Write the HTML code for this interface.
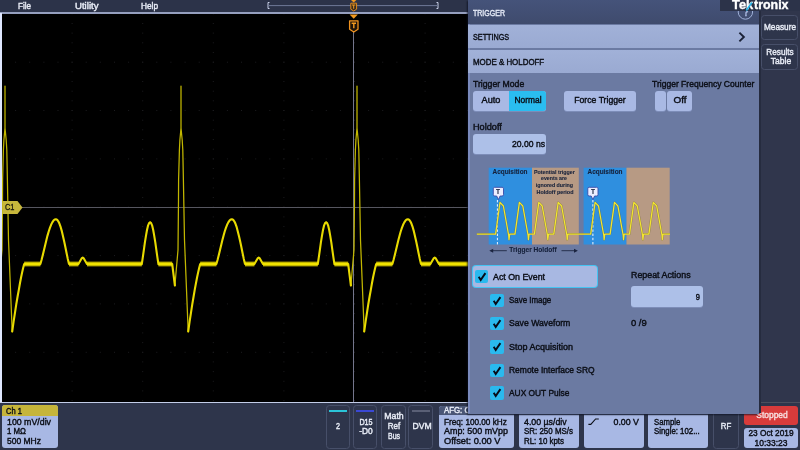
<!DOCTYPE html>
<html><head><meta charset="utf-8"><title>Trigger - Mode &amp; Holdoff</title>
<style>
html,body{margin:0;padding:0;background:#000;}
body{width:800px;height:450px;position:relative;overflow:hidden;font-family:"Liberation Sans",sans-serif;font-size:9.2px;color:#0b0e16;}
#root{position:absolute;left:0;top:0;width:800px;height:450px;overflow:hidden;will-change:transform;}
.a{position:absolute;white-space:nowrap;}
.t{position:absolute;white-space:nowrap;}
.badge{background:#a8b8e4;border-radius:3px;overflow:hidden;}
.bh{position:absolute;left:0;top:0;width:100%;height:9.6px;background:#4a5676;}
.btn{background:#2e354b;border:1px solid #474f69;border-radius:3.5px;box-sizing:border-box;}
.lb{background:#a9b9e4;border-radius:3px;box-shadow:0 1px 0 0 #7d8db8;}
.cb{background:#2ab9ee;border-radius:2px;width:13.6px;height:13.2px;}
.ck{position:absolute;left:0;top:0;}
</style></head><body><div id="root">

<svg class="a" style="left:0;top:0" width="800" height="450" viewBox="0 0 800 450">
<g fill="#5c5c66" opacity="0.3"><rect x="71.6" y="13.3" width="1" height="1"/><rect x="71.6" y="23.0" width="1" height="1"/><rect x="71.6" y="32.6" width="1" height="1"/><rect x="71.6" y="42.3" width="1" height="1"/><rect x="71.6" y="52.0" width="1" height="1"/><rect x="71.6" y="61.7" width="1" height="1"/><rect x="71.6" y="71.3" width="1" height="1"/><rect x="71.6" y="81.0" width="1" height="1"/><rect x="71.6" y="90.7" width="1" height="1"/><rect x="71.6" y="100.3" width="1" height="1"/><rect x="71.6" y="110.0" width="1" height="1"/><rect x="71.6" y="119.7" width="1" height="1"/><rect x="71.6" y="129.3" width="1" height="1"/><rect x="71.6" y="139.0" width="1" height="1"/><rect x="71.6" y="148.7" width="1" height="1"/><rect x="71.6" y="158.4" width="1" height="1"/><rect x="71.6" y="168.0" width="1" height="1"/><rect x="71.6" y="177.7" width="1" height="1"/><rect x="71.6" y="187.4" width="1" height="1"/><rect x="71.6" y="197.0" width="1" height="1"/><rect x="71.6" y="206.7" width="1" height="1"/><rect x="71.6" y="216.4" width="1" height="1"/><rect x="71.6" y="226.0" width="1" height="1"/><rect x="71.6" y="235.7" width="1" height="1"/><rect x="71.6" y="245.4" width="1" height="1"/><rect x="71.6" y="255.1" width="1" height="1"/><rect x="71.6" y="264.7" width="1" height="1"/><rect x="71.6" y="274.4" width="1" height="1"/><rect x="71.6" y="284.1" width="1" height="1"/><rect x="71.6" y="293.7" width="1" height="1"/><rect x="71.6" y="303.4" width="1" height="1"/><rect x="71.6" y="313.1" width="1" height="1"/><rect x="71.6" y="322.7" width="1" height="1"/><rect x="71.6" y="332.4" width="1" height="1"/><rect x="71.6" y="342.1" width="1" height="1"/><rect x="71.6" y="351.8" width="1" height="1"/><rect x="71.6" y="361.4" width="1" height="1"/><rect x="71.6" y="371.1" width="1" height="1"/><rect x="71.6" y="380.8" width="1" height="1"/><rect x="71.6" y="390.4" width="1" height="1"/><rect x="71.6" y="400.1" width="1" height="1"/><rect x="142.2" y="13.3" width="1" height="1"/><rect x="142.2" y="23.0" width="1" height="1"/><rect x="142.2" y="32.6" width="1" height="1"/><rect x="142.2" y="42.3" width="1" height="1"/><rect x="142.2" y="52.0" width="1" height="1"/><rect x="142.2" y="61.7" width="1" height="1"/><rect x="142.2" y="71.3" width="1" height="1"/><rect x="142.2" y="81.0" width="1" height="1"/><rect x="142.2" y="90.7" width="1" height="1"/><rect x="142.2" y="100.3" width="1" height="1"/><rect x="142.2" y="110.0" width="1" height="1"/><rect x="142.2" y="119.7" width="1" height="1"/><rect x="142.2" y="129.3" width="1" height="1"/><rect x="142.2" y="139.0" width="1" height="1"/><rect x="142.2" y="148.7" width="1" height="1"/><rect x="142.2" y="158.4" width="1" height="1"/><rect x="142.2" y="168.0" width="1" height="1"/><rect x="142.2" y="177.7" width="1" height="1"/><rect x="142.2" y="187.4" width="1" height="1"/><rect x="142.2" y="197.0" width="1" height="1"/><rect x="142.2" y="206.7" width="1" height="1"/><rect x="142.2" y="216.4" width="1" height="1"/><rect x="142.2" y="226.0" width="1" height="1"/><rect x="142.2" y="235.7" width="1" height="1"/><rect x="142.2" y="245.4" width="1" height="1"/><rect x="142.2" y="255.1" width="1" height="1"/><rect x="142.2" y="264.7" width="1" height="1"/><rect x="142.2" y="274.4" width="1" height="1"/><rect x="142.2" y="284.1" width="1" height="1"/><rect x="142.2" y="293.7" width="1" height="1"/><rect x="142.2" y="303.4" width="1" height="1"/><rect x="142.2" y="313.1" width="1" height="1"/><rect x="142.2" y="322.7" width="1" height="1"/><rect x="142.2" y="332.4" width="1" height="1"/><rect x="142.2" y="342.1" width="1" height="1"/><rect x="142.2" y="351.8" width="1" height="1"/><rect x="142.2" y="361.4" width="1" height="1"/><rect x="142.2" y="371.1" width="1" height="1"/><rect x="142.2" y="380.8" width="1" height="1"/><rect x="142.2" y="390.4" width="1" height="1"/><rect x="142.2" y="400.1" width="1" height="1"/><rect x="212.8" y="13.3" width="1" height="1"/><rect x="212.8" y="23.0" width="1" height="1"/><rect x="212.8" y="32.6" width="1" height="1"/><rect x="212.8" y="42.3" width="1" height="1"/><rect x="212.8" y="52.0" width="1" height="1"/><rect x="212.8" y="61.7" width="1" height="1"/><rect x="212.8" y="71.3" width="1" height="1"/><rect x="212.8" y="81.0" width="1" height="1"/><rect x="212.8" y="90.7" width="1" height="1"/><rect x="212.8" y="100.3" width="1" height="1"/><rect x="212.8" y="110.0" width="1" height="1"/><rect x="212.8" y="119.7" width="1" height="1"/><rect x="212.8" y="129.3" width="1" height="1"/><rect x="212.8" y="139.0" width="1" height="1"/><rect x="212.8" y="148.7" width="1" height="1"/><rect x="212.8" y="158.4" width="1" height="1"/><rect x="212.8" y="168.0" width="1" height="1"/><rect x="212.8" y="177.7" width="1" height="1"/><rect x="212.8" y="187.4" width="1" height="1"/><rect x="212.8" y="197.0" width="1" height="1"/><rect x="212.8" y="206.7" width="1" height="1"/><rect x="212.8" y="216.4" width="1" height="1"/><rect x="212.8" y="226.0" width="1" height="1"/><rect x="212.8" y="235.7" width="1" height="1"/><rect x="212.8" y="245.4" width="1" height="1"/><rect x="212.8" y="255.1" width="1" height="1"/><rect x="212.8" y="264.7" width="1" height="1"/><rect x="212.8" y="274.4" width="1" height="1"/><rect x="212.8" y="284.1" width="1" height="1"/><rect x="212.8" y="293.7" width="1" height="1"/><rect x="212.8" y="303.4" width="1" height="1"/><rect x="212.8" y="313.1" width="1" height="1"/><rect x="212.8" y="322.7" width="1" height="1"/><rect x="212.8" y="332.4" width="1" height="1"/><rect x="212.8" y="342.1" width="1" height="1"/><rect x="212.8" y="351.8" width="1" height="1"/><rect x="212.8" y="361.4" width="1" height="1"/><rect x="212.8" y="371.1" width="1" height="1"/><rect x="212.8" y="380.8" width="1" height="1"/><rect x="212.8" y="390.4" width="1" height="1"/><rect x="212.8" y="400.1" width="1" height="1"/><rect x="283.4" y="13.3" width="1" height="1"/><rect x="283.4" y="23.0" width="1" height="1"/><rect x="283.4" y="32.6" width="1" height="1"/><rect x="283.4" y="42.3" width="1" height="1"/><rect x="283.4" y="52.0" width="1" height="1"/><rect x="283.4" y="61.7" width="1" height="1"/><rect x="283.4" y="71.3" width="1" height="1"/><rect x="283.4" y="81.0" width="1" height="1"/><rect x="283.4" y="90.7" width="1" height="1"/><rect x="283.4" y="100.3" width="1" height="1"/><rect x="283.4" y="110.0" width="1" height="1"/><rect x="283.4" y="119.7" width="1" height="1"/><rect x="283.4" y="129.3" width="1" height="1"/><rect x="283.4" y="139.0" width="1" height="1"/><rect x="283.4" y="148.7" width="1" height="1"/><rect x="283.4" y="158.4" width="1" height="1"/><rect x="283.4" y="168.0" width="1" height="1"/><rect x="283.4" y="177.7" width="1" height="1"/><rect x="283.4" y="187.4" width="1" height="1"/><rect x="283.4" y="197.0" width="1" height="1"/><rect x="283.4" y="206.7" width="1" height="1"/><rect x="283.4" y="216.4" width="1" height="1"/><rect x="283.4" y="226.0" width="1" height="1"/><rect x="283.4" y="235.7" width="1" height="1"/><rect x="283.4" y="245.4" width="1" height="1"/><rect x="283.4" y="255.1" width="1" height="1"/><rect x="283.4" y="264.7" width="1" height="1"/><rect x="283.4" y="274.4" width="1" height="1"/><rect x="283.4" y="284.1" width="1" height="1"/><rect x="283.4" y="293.7" width="1" height="1"/><rect x="283.4" y="303.4" width="1" height="1"/><rect x="283.4" y="313.1" width="1" height="1"/><rect x="283.4" y="322.7" width="1" height="1"/><rect x="283.4" y="332.4" width="1" height="1"/><rect x="283.4" y="342.1" width="1" height="1"/><rect x="283.4" y="351.8" width="1" height="1"/><rect x="283.4" y="361.4" width="1" height="1"/><rect x="283.4" y="371.1" width="1" height="1"/><rect x="283.4" y="380.8" width="1" height="1"/><rect x="283.4" y="390.4" width="1" height="1"/><rect x="283.4" y="400.1" width="1" height="1"/><rect x="354.0" y="13.3" width="1" height="1"/><rect x="354.0" y="23.0" width="1" height="1"/><rect x="354.0" y="32.6" width="1" height="1"/><rect x="354.0" y="42.3" width="1" height="1"/><rect x="354.0" y="52.0" width="1" height="1"/><rect x="354.0" y="61.7" width="1" height="1"/><rect x="354.0" y="71.3" width="1" height="1"/><rect x="354.0" y="81.0" width="1" height="1"/><rect x="354.0" y="90.7" width="1" height="1"/><rect x="354.0" y="100.3" width="1" height="1"/><rect x="354.0" y="110.0" width="1" height="1"/><rect x="354.0" y="119.7" width="1" height="1"/><rect x="354.0" y="129.3" width="1" height="1"/><rect x="354.0" y="139.0" width="1" height="1"/><rect x="354.0" y="148.7" width="1" height="1"/><rect x="354.0" y="158.4" width="1" height="1"/><rect x="354.0" y="168.0" width="1" height="1"/><rect x="354.0" y="177.7" width="1" height="1"/><rect x="354.0" y="187.4" width="1" height="1"/><rect x="354.0" y="197.0" width="1" height="1"/><rect x="354.0" y="206.7" width="1" height="1"/><rect x="354.0" y="216.4" width="1" height="1"/><rect x="354.0" y="226.0" width="1" height="1"/><rect x="354.0" y="235.7" width="1" height="1"/><rect x="354.0" y="245.4" width="1" height="1"/><rect x="354.0" y="255.1" width="1" height="1"/><rect x="354.0" y="264.7" width="1" height="1"/><rect x="354.0" y="274.4" width="1" height="1"/><rect x="354.0" y="284.1" width="1" height="1"/><rect x="354.0" y="293.7" width="1" height="1"/><rect x="354.0" y="303.4" width="1" height="1"/><rect x="354.0" y="313.1" width="1" height="1"/><rect x="354.0" y="322.7" width="1" height="1"/><rect x="354.0" y="332.4" width="1" height="1"/><rect x="354.0" y="342.1" width="1" height="1"/><rect x="354.0" y="351.8" width="1" height="1"/><rect x="354.0" y="361.4" width="1" height="1"/><rect x="354.0" y="371.1" width="1" height="1"/><rect x="354.0" y="380.8" width="1" height="1"/><rect x="354.0" y="390.4" width="1" height="1"/><rect x="354.0" y="400.1" width="1" height="1"/><rect x="424.6" y="13.3" width="1" height="1"/><rect x="424.6" y="23.0" width="1" height="1"/><rect x="424.6" y="32.6" width="1" height="1"/><rect x="424.6" y="42.3" width="1" height="1"/><rect x="424.6" y="52.0" width="1" height="1"/><rect x="424.6" y="61.7" width="1" height="1"/><rect x="424.6" y="71.3" width="1" height="1"/><rect x="424.6" y="81.0" width="1" height="1"/><rect x="424.6" y="90.7" width="1" height="1"/><rect x="424.6" y="100.3" width="1" height="1"/><rect x="424.6" y="110.0" width="1" height="1"/><rect x="424.6" y="119.7" width="1" height="1"/><rect x="424.6" y="129.3" width="1" height="1"/><rect x="424.6" y="139.0" width="1" height="1"/><rect x="424.6" y="148.7" width="1" height="1"/><rect x="424.6" y="158.4" width="1" height="1"/><rect x="424.6" y="168.0" width="1" height="1"/><rect x="424.6" y="177.7" width="1" height="1"/><rect x="424.6" y="187.4" width="1" height="1"/><rect x="424.6" y="197.0" width="1" height="1"/><rect x="424.6" y="206.7" width="1" height="1"/><rect x="424.6" y="216.4" width="1" height="1"/><rect x="424.6" y="226.0" width="1" height="1"/><rect x="424.6" y="235.7" width="1" height="1"/><rect x="424.6" y="245.4" width="1" height="1"/><rect x="424.6" y="255.1" width="1" height="1"/><rect x="424.6" y="264.7" width="1" height="1"/><rect x="424.6" y="274.4" width="1" height="1"/><rect x="424.6" y="284.1" width="1" height="1"/><rect x="424.6" y="293.7" width="1" height="1"/><rect x="424.6" y="303.4" width="1" height="1"/><rect x="424.6" y="313.1" width="1" height="1"/><rect x="424.6" y="322.7" width="1" height="1"/><rect x="424.6" y="332.4" width="1" height="1"/><rect x="424.6" y="342.1" width="1" height="1"/><rect x="424.6" y="351.8" width="1" height="1"/><rect x="424.6" y="361.4" width="1" height="1"/><rect x="424.6" y="371.1" width="1" height="1"/><rect x="424.6" y="380.8" width="1" height="1"/><rect x="424.6" y="390.4" width="1" height="1"/><rect x="424.6" y="400.1" width="1" height="1"/><rect x="1.0" y="61.7" width="1" height="1"/><rect x="15.1" y="61.7" width="1" height="1"/><rect x="29.2" y="61.7" width="1" height="1"/><rect x="43.4" y="61.7" width="1" height="1"/><rect x="57.5" y="61.7" width="1" height="1"/><rect x="71.6" y="61.7" width="1" height="1"/><rect x="85.7" y="61.7" width="1" height="1"/><rect x="99.8" y="61.7" width="1" height="1"/><rect x="114.0" y="61.7" width="1" height="1"/><rect x="128.1" y="61.7" width="1" height="1"/><rect x="142.2" y="61.7" width="1" height="1"/><rect x="156.3" y="61.7" width="1" height="1"/><rect x="170.4" y="61.7" width="1" height="1"/><rect x="184.6" y="61.7" width="1" height="1"/><rect x="198.7" y="61.7" width="1" height="1"/><rect x="212.8" y="61.7" width="1" height="1"/><rect x="226.9" y="61.7" width="1" height="1"/><rect x="241.0" y="61.7" width="1" height="1"/><rect x="255.2" y="61.7" width="1" height="1"/><rect x="269.3" y="61.7" width="1" height="1"/><rect x="283.4" y="61.7" width="1" height="1"/><rect x="297.5" y="61.7" width="1" height="1"/><rect x="311.6" y="61.7" width="1" height="1"/><rect x="325.8" y="61.7" width="1" height="1"/><rect x="339.9" y="61.7" width="1" height="1"/><rect x="354.0" y="61.7" width="1" height="1"/><rect x="368.1" y="61.7" width="1" height="1"/><rect x="382.2" y="61.7" width="1" height="1"/><rect x="396.4" y="61.7" width="1" height="1"/><rect x="410.5" y="61.7" width="1" height="1"/><rect x="424.6" y="61.7" width="1" height="1"/><rect x="438.7" y="61.7" width="1" height="1"/><rect x="452.8" y="61.7" width="1" height="1"/><rect x="467.0" y="61.7" width="1" height="1"/><rect x="1.0" y="110.0" width="1" height="1"/><rect x="15.1" y="110.0" width="1" height="1"/><rect x="29.2" y="110.0" width="1" height="1"/><rect x="43.4" y="110.0" width="1" height="1"/><rect x="57.5" y="110.0" width="1" height="1"/><rect x="71.6" y="110.0" width="1" height="1"/><rect x="85.7" y="110.0" width="1" height="1"/><rect x="99.8" y="110.0" width="1" height="1"/><rect x="114.0" y="110.0" width="1" height="1"/><rect x="128.1" y="110.0" width="1" height="1"/><rect x="142.2" y="110.0" width="1" height="1"/><rect x="156.3" y="110.0" width="1" height="1"/><rect x="170.4" y="110.0" width="1" height="1"/><rect x="184.6" y="110.0" width="1" height="1"/><rect x="198.7" y="110.0" width="1" height="1"/><rect x="212.8" y="110.0" width="1" height="1"/><rect x="226.9" y="110.0" width="1" height="1"/><rect x="241.0" y="110.0" width="1" height="1"/><rect x="255.2" y="110.0" width="1" height="1"/><rect x="269.3" y="110.0" width="1" height="1"/><rect x="283.4" y="110.0" width="1" height="1"/><rect x="297.5" y="110.0" width="1" height="1"/><rect x="311.6" y="110.0" width="1" height="1"/><rect x="325.8" y="110.0" width="1" height="1"/><rect x="339.9" y="110.0" width="1" height="1"/><rect x="354.0" y="110.0" width="1" height="1"/><rect x="368.1" y="110.0" width="1" height="1"/><rect x="382.2" y="110.0" width="1" height="1"/><rect x="396.4" y="110.0" width="1" height="1"/><rect x="410.5" y="110.0" width="1" height="1"/><rect x="424.6" y="110.0" width="1" height="1"/><rect x="438.7" y="110.0" width="1" height="1"/><rect x="452.8" y="110.0" width="1" height="1"/><rect x="467.0" y="110.0" width="1" height="1"/><rect x="1.0" y="158.4" width="1" height="1"/><rect x="15.1" y="158.4" width="1" height="1"/><rect x="29.2" y="158.4" width="1" height="1"/><rect x="43.4" y="158.4" width="1" height="1"/><rect x="57.5" y="158.4" width="1" height="1"/><rect x="71.6" y="158.4" width="1" height="1"/><rect x="85.7" y="158.4" width="1" height="1"/><rect x="99.8" y="158.4" width="1" height="1"/><rect x="114.0" y="158.4" width="1" height="1"/><rect x="128.1" y="158.4" width="1" height="1"/><rect x="142.2" y="158.4" width="1" height="1"/><rect x="156.3" y="158.4" width="1" height="1"/><rect x="170.4" y="158.4" width="1" height="1"/><rect x="184.6" y="158.4" width="1" height="1"/><rect x="198.7" y="158.4" width="1" height="1"/><rect x="212.8" y="158.4" width="1" height="1"/><rect x="226.9" y="158.4" width="1" height="1"/><rect x="241.0" y="158.4" width="1" height="1"/><rect x="255.2" y="158.4" width="1" height="1"/><rect x="269.3" y="158.4" width="1" height="1"/><rect x="283.4" y="158.4" width="1" height="1"/><rect x="297.5" y="158.4" width="1" height="1"/><rect x="311.6" y="158.4" width="1" height="1"/><rect x="325.8" y="158.4" width="1" height="1"/><rect x="339.9" y="158.4" width="1" height="1"/><rect x="354.0" y="158.4" width="1" height="1"/><rect x="368.1" y="158.4" width="1" height="1"/><rect x="382.2" y="158.4" width="1" height="1"/><rect x="396.4" y="158.4" width="1" height="1"/><rect x="410.5" y="158.4" width="1" height="1"/><rect x="424.6" y="158.4" width="1" height="1"/><rect x="438.7" y="158.4" width="1" height="1"/><rect x="452.8" y="158.4" width="1" height="1"/><rect x="467.0" y="158.4" width="1" height="1"/><rect x="1.0" y="206.7" width="1" height="1"/><rect x="15.1" y="206.7" width="1" height="1"/><rect x="29.2" y="206.7" width="1" height="1"/><rect x="43.4" y="206.7" width="1" height="1"/><rect x="57.5" y="206.7" width="1" height="1"/><rect x="71.6" y="206.7" width="1" height="1"/><rect x="85.7" y="206.7" width="1" height="1"/><rect x="99.8" y="206.7" width="1" height="1"/><rect x="114.0" y="206.7" width="1" height="1"/><rect x="128.1" y="206.7" width="1" height="1"/><rect x="142.2" y="206.7" width="1" height="1"/><rect x="156.3" y="206.7" width="1" height="1"/><rect x="170.4" y="206.7" width="1" height="1"/><rect x="184.6" y="206.7" width="1" height="1"/><rect x="198.7" y="206.7" width="1" height="1"/><rect x="212.8" y="206.7" width="1" height="1"/><rect x="226.9" y="206.7" width="1" height="1"/><rect x="241.0" y="206.7" width="1" height="1"/><rect x="255.2" y="206.7" width="1" height="1"/><rect x="269.3" y="206.7" width="1" height="1"/><rect x="283.4" y="206.7" width="1" height="1"/><rect x="297.5" y="206.7" width="1" height="1"/><rect x="311.6" y="206.7" width="1" height="1"/><rect x="325.8" y="206.7" width="1" height="1"/><rect x="339.9" y="206.7" width="1" height="1"/><rect x="354.0" y="206.7" width="1" height="1"/><rect x="368.1" y="206.7" width="1" height="1"/><rect x="382.2" y="206.7" width="1" height="1"/><rect x="396.4" y="206.7" width="1" height="1"/><rect x="410.5" y="206.7" width="1" height="1"/><rect x="424.6" y="206.7" width="1" height="1"/><rect x="438.7" y="206.7" width="1" height="1"/><rect x="452.8" y="206.7" width="1" height="1"/><rect x="467.0" y="206.7" width="1" height="1"/><rect x="1.0" y="255.1" width="1" height="1"/><rect x="15.1" y="255.1" width="1" height="1"/><rect x="29.2" y="255.1" width="1" height="1"/><rect x="43.4" y="255.1" width="1" height="1"/><rect x="57.5" y="255.1" width="1" height="1"/><rect x="71.6" y="255.1" width="1" height="1"/><rect x="85.7" y="255.1" width="1" height="1"/><rect x="99.8" y="255.1" width="1" height="1"/><rect x="114.0" y="255.1" width="1" height="1"/><rect x="128.1" y="255.1" width="1" height="1"/><rect x="142.2" y="255.1" width="1" height="1"/><rect x="156.3" y="255.1" width="1" height="1"/><rect x="170.4" y="255.1" width="1" height="1"/><rect x="184.6" y="255.1" width="1" height="1"/><rect x="198.7" y="255.1" width="1" height="1"/><rect x="212.8" y="255.1" width="1" height="1"/><rect x="226.9" y="255.1" width="1" height="1"/><rect x="241.0" y="255.1" width="1" height="1"/><rect x="255.2" y="255.1" width="1" height="1"/><rect x="269.3" y="255.1" width="1" height="1"/><rect x="283.4" y="255.1" width="1" height="1"/><rect x="297.5" y="255.1" width="1" height="1"/><rect x="311.6" y="255.1" width="1" height="1"/><rect x="325.8" y="255.1" width="1" height="1"/><rect x="339.9" y="255.1" width="1" height="1"/><rect x="354.0" y="255.1" width="1" height="1"/><rect x="368.1" y="255.1" width="1" height="1"/><rect x="382.2" y="255.1" width="1" height="1"/><rect x="396.4" y="255.1" width="1" height="1"/><rect x="410.5" y="255.1" width="1" height="1"/><rect x="424.6" y="255.1" width="1" height="1"/><rect x="438.7" y="255.1" width="1" height="1"/><rect x="452.8" y="255.1" width="1" height="1"/><rect x="467.0" y="255.1" width="1" height="1"/><rect x="1.0" y="303.4" width="1" height="1"/><rect x="15.1" y="303.4" width="1" height="1"/><rect x="29.2" y="303.4" width="1" height="1"/><rect x="43.4" y="303.4" width="1" height="1"/><rect x="57.5" y="303.4" width="1" height="1"/><rect x="71.6" y="303.4" width="1" height="1"/><rect x="85.7" y="303.4" width="1" height="1"/><rect x="99.8" y="303.4" width="1" height="1"/><rect x="114.0" y="303.4" width="1" height="1"/><rect x="128.1" y="303.4" width="1" height="1"/><rect x="142.2" y="303.4" width="1" height="1"/><rect x="156.3" y="303.4" width="1" height="1"/><rect x="170.4" y="303.4" width="1" height="1"/><rect x="184.6" y="303.4" width="1" height="1"/><rect x="198.7" y="303.4" width="1" height="1"/><rect x="212.8" y="303.4" width="1" height="1"/><rect x="226.9" y="303.4" width="1" height="1"/><rect x="241.0" y="303.4" width="1" height="1"/><rect x="255.2" y="303.4" width="1" height="1"/><rect x="269.3" y="303.4" width="1" height="1"/><rect x="283.4" y="303.4" width="1" height="1"/><rect x="297.5" y="303.4" width="1" height="1"/><rect x="311.6" y="303.4" width="1" height="1"/><rect x="325.8" y="303.4" width="1" height="1"/><rect x="339.9" y="303.4" width="1" height="1"/><rect x="354.0" y="303.4" width="1" height="1"/><rect x="368.1" y="303.4" width="1" height="1"/><rect x="382.2" y="303.4" width="1" height="1"/><rect x="396.4" y="303.4" width="1" height="1"/><rect x="410.5" y="303.4" width="1" height="1"/><rect x="424.6" y="303.4" width="1" height="1"/><rect x="438.7" y="303.4" width="1" height="1"/><rect x="452.8" y="303.4" width="1" height="1"/><rect x="467.0" y="303.4" width="1" height="1"/><rect x="1.0" y="351.8" width="1" height="1"/><rect x="15.1" y="351.8" width="1" height="1"/><rect x="29.2" y="351.8" width="1" height="1"/><rect x="43.4" y="351.8" width="1" height="1"/><rect x="57.5" y="351.8" width="1" height="1"/><rect x="71.6" y="351.8" width="1" height="1"/><rect x="85.7" y="351.8" width="1" height="1"/><rect x="99.8" y="351.8" width="1" height="1"/><rect x="114.0" y="351.8" width="1" height="1"/><rect x="128.1" y="351.8" width="1" height="1"/><rect x="142.2" y="351.8" width="1" height="1"/><rect x="156.3" y="351.8" width="1" height="1"/><rect x="170.4" y="351.8" width="1" height="1"/><rect x="184.6" y="351.8" width="1" height="1"/><rect x="198.7" y="351.8" width="1" height="1"/><rect x="212.8" y="351.8" width="1" height="1"/><rect x="226.9" y="351.8" width="1" height="1"/><rect x="241.0" y="351.8" width="1" height="1"/><rect x="255.2" y="351.8" width="1" height="1"/><rect x="269.3" y="351.8" width="1" height="1"/><rect x="283.4" y="351.8" width="1" height="1"/><rect x="297.5" y="351.8" width="1" height="1"/><rect x="311.6" y="351.8" width="1" height="1"/><rect x="325.8" y="351.8" width="1" height="1"/><rect x="339.9" y="351.8" width="1" height="1"/><rect x="354.0" y="351.8" width="1" height="1"/><rect x="368.1" y="351.8" width="1" height="1"/><rect x="382.2" y="351.8" width="1" height="1"/><rect x="396.4" y="351.8" width="1" height="1"/><rect x="410.5" y="351.8" width="1" height="1"/><rect x="424.6" y="351.8" width="1" height="1"/><rect x="438.7" y="351.8" width="1" height="1"/><rect x="452.8" y="351.8" width="1" height="1"/><rect x="467.0" y="351.8" width="1" height="1"/></g>
<line x1="22" y1="207.5" x2="468" y2="207.5" stroke="#56565f" stroke-width="1"/>
<line x1="353.5" y1="32" x2="353.5" y2="402" stroke="#74768c" stroke-width="1"/>
<g fill="none" stroke-linejoin="round" stroke-linecap="round">
<path d="M24.2,264.0H40.4 M69.0,264.0H78.4 M87.0,264.0H141.8 M158.4,264.0H172.2 M200.2,264.0H216.4 M245.0,264.0H254.4 M263.0,264.0H317.8 M334.4,264.0H348.2 M376.2,264.0H392.4 M421.0,264.0H430.4 M439.0,264.0H493.8" stroke="#8f8400" stroke-width="5" stroke-linecap="butt"/>
<path d="M-1.1,285.5 L2.0,250.0 L2.5,200.0 L2.6,180.0 L3.4,150.0 L3.9,140.0 L5.0,128.0 L5.0,86.0 L5.0,128.0 L6.2,140.0 L6.8,150.0 L7.4,180.0 L8.5,240.0 L12.2,331.5 M174.9,285.5 L178.0,250.0 L178.5,200.0 L178.6,180.0 L179.4,150.0 L179.9,140.0 L181.0,128.0 L181.0,86.0 L181.0,128.0 L182.2,140.0 L182.8,150.0 L183.4,180.0 L184.5,240.0 L188.2,331.5 M350.9,285.5 L354.0,250.0 L354.5,200.0 L354.6,180.0 L355.4,150.0 L355.9,140.0 L357.0,128.0 L357.0,86.0 L357.0,128.0 L358.2,140.0 L358.8,150.0 L359.4,180.0 L360.5,240.0 L364.2,331.5" stroke="#c2b700" stroke-width="1.25"/>
<path d="M-19.7,249.7 L-18.6,257.3 L-17.6,264.0 L-3.8,264.0 L-1.1,285.5 M12.2,331.5 L13.6,321.7 L15.0,312.6 L16.3,304.2 L17.6,296.5 L18.9,289.4 L20.0,283.0 L21.1,277.2 L22.2,272.1 L23.2,267.7 L24.2,264.0 L40.4,264.0 L41.6,259.8 L42.8,254.9 L44.0,249.9 L45.2,244.9 L46.4,240.1 L47.5,235.6 L48.7,231.5 L49.9,227.9 L51.1,224.8 L52.3,222.4 L53.5,220.6 L54.7,219.5 L55.9,219.2 L57.1,219.7 L58.3,221.3 L59.5,223.8 L60.7,227.2 L61.9,231.4 L63.0,236.2 L64.2,241.6 L65.4,247.3 L66.6,253.2 L67.8,259.0 L69.0,264.0 L78.4,264.0 L81.6,258.4 L82.7,257.6 L83.8,258.4 L87.0,264.0 L141.8,264.0 L142.8,257.3 L143.9,249.7 L144.9,242.4 L146.0,235.6 L147.0,230.0 L148.0,225.7 L149.1,223.1 L150.1,222.2 L151.1,223.1 L152.2,225.7 L153.2,230.0 L154.2,235.6 L155.3,242.4 L156.3,249.7 L157.4,257.3 L158.4,264.0 L172.2,264.0 L174.9,285.5 M188.2,331.5 L189.6,321.7 L191.0,312.6 L192.3,304.2 L193.6,296.5 L194.8,289.4 L196.0,283.0 L197.1,277.2 L198.2,272.1 L199.2,267.7 L200.2,264.0 L216.4,264.0 L217.6,259.8 L218.8,254.9 L220.0,249.9 L221.2,244.9 L222.4,240.1 L223.6,235.6 L224.7,231.5 L225.9,227.9 L227.1,224.8 L228.3,222.4 L229.5,220.6 L230.7,219.5 L231.9,219.2 L233.1,219.7 L234.3,221.3 L235.5,223.8 L236.7,227.2 L237.8,231.4 L239.0,236.2 L240.2,241.6 L241.4,247.3 L242.6,253.2 L243.8,259.0 L245.0,264.0 L254.4,264.0 L257.6,258.4 L258.7,257.6 L259.8,258.4 L263.0,264.0 L317.8,264.0 L318.8,257.3 L319.9,249.7 L320.9,242.4 L322.0,235.6 L323.0,230.0 L324.0,225.7 L325.1,223.1 L326.1,222.2 L327.1,223.1 L328.2,225.7 L329.2,230.0 L330.2,235.6 L331.3,242.4 L332.3,249.7 L333.4,257.3 L334.4,264.0 L348.2,264.0 L350.9,285.5 M364.2,331.5 L365.6,321.7 L367.0,312.6 L368.3,304.2 L369.6,296.5 L370.9,289.4 L372.0,283.0 L373.1,277.2 L374.2,272.1 L375.2,267.7 L376.2,264.0 L392.4,264.0 L393.6,259.8 L394.8,254.9 L396.0,249.9 L397.2,244.9 L398.4,240.1 L399.6,235.6 L400.7,231.5 L401.9,227.9 L403.1,224.8 L404.3,222.4 L405.5,220.6 L406.7,219.5 L407.9,219.2 L409.1,219.7 L410.3,221.3 L411.5,223.8 L412.7,227.2 L413.9,231.4 L415.0,236.2 L416.2,241.6 L417.4,247.3 L418.6,253.2 L419.8,259.0 L421.0,264.0 L430.4,264.0 L433.6,258.4 L434.7,257.6 L435.8,258.4 L439.0,264.0 L493.8,264.0 L494.8,257.3 L495.9,249.7 L496.9,242.4 L498.0,235.6 L499.0,230.0" stroke="#e8da00" stroke-width="2.1"/>
<path d="M24.2,264.0H40.4 M69.0,264.0H78.4 M87.0,264.0H141.8 M158.4,264.0H172.2 M200.2,264.0H216.4 M245.0,264.0H254.4 M263.0,264.0H317.8 M334.4,264.0H348.2 M376.2,264.0H392.4 M421.0,264.0H430.4 M439.0,264.0H493.8" stroke="#f2e400" stroke-width="3" stroke-linecap="butt"/>
</g>
<path d="M2.5,201 H17.5 L22.5,207.5 L17.5,214 H2.5 Z" fill="#c7b73c"/>
</svg>

<div class="t" style="top:202.32px;font-size:8.6px;line-height:11px;height:11px;color:#1a1a10;-webkit-text-stroke:0.3px #1a1a10;left:5.00px;transform-origin:0 50%;transform:scaleX(0.864);">C1</div>
<div class="a" style="left:0;top:0;width:800px;height:12px;background:#2c3349;"></div>
<div class="a" style="left:0;top:12px;width:800px;height:1.5px;background:#959fbe;"></div>
<div class="a" style="left:0;top:13px;width:1.8px;height:390px;background:#dfe7ff;"></div>
<div class="t" style="top:0.21px;font-size:9.2px;line-height:12px;height:12px;color:#e9edf7;-webkit-text-stroke:0.42px #e9edf7;left:18.00px;transform-origin:0 50%;transform:scaleX(0.878);">File</div>
<div class="t" style="top:0.21px;font-size:9.2px;line-height:12px;height:12px;color:#e9edf7;-webkit-text-stroke:0.42px #e9edf7;left:75.00px;transform-origin:0 50%;transform:scaleX(1.046);">Utility</div>
<div class="t" style="top:0.21px;font-size:9.2px;line-height:12px;height:12px;color:#e9edf7;-webkit-text-stroke:0.42px #e9edf7;left:141.00px;transform-origin:0 50%;transform:scaleX(0.899);">Help</div>
<svg class="a" style="left:260px;top:0" width="200" height="36" viewBox="260 0 200 36">
<path d="M269.5,2.5 H268 V8.5 H269.5 M436.5,2.5 H438 V8.5 H436.5" fill="none" stroke="#c9d1e8" stroke-width="1"/>
<line x1="268" y1="5.6" x2="438" y2="5.6" stroke="#6f7a98" stroke-width="1"/>
<path d="M351,0 H356.4 L353.7,2.6 Z" fill="#f39a1e"/>
<path d="M350.8,3.2 H356.6 V9.2 L353.7,11 L350.8,9.2 Z" fill="#3a2c1c" stroke="#e08a1e" stroke-width="1"/>
<path d="M352,5 H355.4 M353.7,5 V8.8" stroke="#f39a1e" stroke-width="1" fill="none"/>
<path d="M349.6,14.6 H357.8 L353.7,18.8 Z" fill="#f39a1e"/>
<path d="M349.6,20.8 H358 V29.3 L353.8,32 L349.6,29.3 Z" fill="#1c130a" stroke="#f0921e" stroke-width="1.3" stroke-linejoin="round"/>
<path d="M351.6,23.3 H356 M353.8,23.3 V28.3" stroke="#f39a1e" stroke-width="1.4" fill="none"/>
</svg>

<div class="a" style="left:0;top:401.6px;width:800px;height:2px;background:#c3cde8;"></div>
<div class="a" style="left:0;top:403.4px;width:800px;height:47px;background:#2e354b;"></div>
<div class="a badge" style="left:2.3px;top:405.3px;width:55.5px;height:42.7px;"><div class="a" style="left:0;top:0;width:56px;height:10.4px;background:#c6b53a;"></div></div>
<div class="t" style="top:404.61px;font-size:9.2px;line-height:12px;height:12px;color:#0b0e16;-webkit-text-stroke:0.42px #0b0e16;left:5.70px;transform-origin:0 50%;transform:scaleX(0.814);">Ch 1</div>
<div class="t" style="top:415.56px;font-size:9.2px;line-height:12px;height:12px;color:#0b0e16;-webkit-text-stroke:0.42px #0b0e16;left:6.70px;transform-origin:0 50%;transform:scaleX(0.957);">100 mV/div</div>
<div class="t" style="top:425.31px;font-size:9.2px;line-height:12px;height:12px;color:#0b0e16;-webkit-text-stroke:0.42px #0b0e16;left:6.70px;transform-origin:0 50%;transform:scaleX(0.856);">1 MΩ</div>
<div class="t" style="top:435.31px;font-size:9.2px;line-height:12px;height:12px;color:#0b0e16;-webkit-text-stroke:0.42px #0b0e16;left:6.70px;transform-origin:0 50%;transform:scaleX(0.925);">500 MHz</div>
<div class="a btn" style="left:326px;top:405.2px;width:23.7px;height:44px;"></div>
<div class="a" style="left:328.7px;top:410px;width:18px;height:1.6px;background:#2bc4d8;"></div>
<div class="t" style="top:420.06px;font-size:9.2px;line-height:12px;height:12px;color:#e9edf7;-webkit-text-stroke:0.42px #e9edf7;left:238.20px;width:200px;text-align:center;transform-origin:50% 50%;transform:scaleX(0.780);">2</div>
<div class="a btn" style="left:353.3px;top:405.2px;width:24px;height:44px;"></div>
<div class="a" style="left:356px;top:410px;width:18px;height:1.6px;background:#3a48d4;"></div>
<div class="t" style="top:415.56px;font-size:9.2px;line-height:12px;height:12px;color:#e9edf7;-webkit-text-stroke:0.42px #e9edf7;left:266.00px;width:200px;text-align:center;transform-origin:50% 50%;transform:scaleX(0.783);">D15</div>
<div class="t" style="top:425.31px;font-size:9.2px;line-height:12px;height:12px;color:#e9edf7;-webkit-text-stroke:0.42px #e9edf7;left:266.00px;width:200px;text-align:center;transform-origin:50% 50%;transform:scaleX(0.911);">-D0</div>
<div class="a btn" style="left:380.7px;top:405.2px;width:25.2px;height:44px;"></div>
<div class="t" style="top:410.31px;font-size:9.2px;line-height:12px;height:12px;color:#e9edf7;-webkit-text-stroke:0.42px #e9edf7;left:294.00px;width:200px;text-align:center;transform-origin:50% 50%;transform:scaleX(0.954);">Math</div>
<div class="t" style="top:420.06px;font-size:9.2px;line-height:12px;height:12px;color:#e9edf7;-webkit-text-stroke:0.42px #e9edf7;left:294.00px;width:200px;text-align:center;transform-origin:50% 50%;transform:scaleX(0.873);">Ref</div>
<div class="t" style="top:430.11px;font-size:9.2px;line-height:12px;height:12px;color:#e9edf7;-webkit-text-stroke:0.42px #e9edf7;left:293.80px;width:200px;text-align:center;transform-origin:50% 50%;transform:scaleX(0.757);">Bus</div>
<div class="a btn" style="left:408.2px;top:405.2px;width:25.3px;height:44px;"></div>
<div class="a" style="left:412.2px;top:410px;width:18px;height:1.6px;background:#5a6076;"></div>
<div class="t" style="top:420.06px;font-size:9.2px;line-height:12px;height:12px;color:#e9edf7;-webkit-text-stroke:0.42px #e9edf7;left:321.90px;width:200px;text-align:center;transform-origin:50% 50%;transform:scaleX(0.940);">DVM</div>
<div class="a badge" style="left:438.7px;top:405.6px;width:75px;height:42.1px;"><div class="bh"></div></div>
<div class="t" style="top:404.31px;font-size:9.2px;line-height:12px;height:12px;color:#e9edf7;-webkit-text-stroke:0.42px #e9edf7;left:443.70px;transform-origin:0 50%;transform:scaleX(0.852);">AFG: Ch 1</div>
<div class="t" style="top:415.56px;font-size:9.2px;line-height:12px;height:12px;color:#0b0e16;-webkit-text-stroke:0.42px #0b0e16;left:443.70px;transform-origin:0 50%;transform:scaleX(0.891);">Freq: 100.00 kHz</div>
<div class="t" style="top:425.31px;font-size:9.2px;line-height:12px;height:12px;color:#0b0e16;-webkit-text-stroke:0.42px #0b0e16;left:443.70px;transform-origin:0 50%;transform:scaleX(0.971);">Amp: 500 mVpp</div>
<div class="t" style="top:435.31px;font-size:9.2px;line-height:12px;height:12px;color:#0b0e16;-webkit-text-stroke:0.42px #0b0e16;left:443.70px;transform-origin:0 50%;transform:scaleX(1.009);">Offset: 0.00 V</div>
<div class="a badge" style="left:518.8px;top:405.6px;width:59.8px;height:42.1px;"><div class="bh"></div></div>
<div class="t" style="top:415.56px;font-size:9.2px;line-height:12px;height:12px;color:#0b0e16;-webkit-text-stroke:0.42px #0b0e16;left:523.70px;transform-origin:0 50%;transform:scaleX(0.955);">4.00 µs/div</div>
<div class="t" style="top:425.31px;font-size:9.2px;line-height:12px;height:12px;color:#0b0e16;-webkit-text-stroke:0.42px #0b0e16;left:523.70px;transform-origin:0 50%;transform:scaleX(0.864);">SR: 250 MS/s</div>
<div class="t" style="top:435.31px;font-size:9.2px;line-height:12px;height:12px;color:#0b0e16;-webkit-text-stroke:0.42px #0b0e16;left:523.70px;transform-origin:0 50%;transform:scaleX(0.861);">RL: 10 kpts</div>
<div class="a badge" style="left:583.8px;top:405.6px;width:59.8px;height:42.1px;"><div class="bh"></div></div>
<svg class="a" style="left:586px;top:415px" width="16" height="12" viewBox="586 415 16 12"><path d="M588.4,424.4 H590.8 L595.6,419 H598.8" fill="none" stroke="#0b0e16" stroke-width="1.1"/></svg>
<div class="t" style="top:415.56px;font-size:9.2px;line-height:12px;height:12px;color:#0b0e16;-webkit-text-stroke:0.42px #0b0e16;left:439.30px;width:200px;text-align:right;transform-origin:100% 50%;transform:scaleX(0.960);">0.00 V</div>
<div class="a badge" style="left:648.4px;top:405.6px;width:59.9px;height:42.1px;"><div class="bh"></div></div>
<div class="t" style="top:415.56px;font-size:9.2px;line-height:12px;height:12px;color:#0b0e16;-webkit-text-stroke:0.42px #0b0e16;left:654.00px;transform-origin:0 50%;transform:scaleX(0.841);">Sample</div>
<div class="t" style="top:425.31px;font-size:9.2px;line-height:12px;height:12px;color:#0b0e16;-webkit-text-stroke:0.42px #0b0e16;left:654.00px;transform-origin:0 50%;transform:scaleX(0.852);">Single: 102...</div>
<div class="a btn" style="left:713.2px;top:405.2px;width:25.6px;height:44px;"></div>
<div class="t" style="top:420.01px;font-size:9.2px;line-height:12px;height:12px;color:#e9edf7;-webkit-text-stroke:0.42px #e9edf7;left:626.20px;width:200px;text-align:center;transform-origin:50% 50%;transform:scaleX(0.857);">RF</div>
<div class="a" style="left:743.8px;top:405.6px;width:53.8px;height:19.5px;background:#d83b3b;border-radius:3px;"></div>
<div class="t" style="top:409.47px;font-size:9.6px;line-height:12px;height:12px;color:#f7dcdc;-webkit-text-stroke:0.42px #f7dcdc;left:671.60px;width:200px;text-align:center;transform-origin:50% 50%;transform:scaleX(0.881);">Stopped</div>
<div class="a badge" style="left:743.8px;top:428px;width:53.8px;height:19.7px;"></div>
<div class="t" style="top:426.61px;font-size:9.2px;line-height:12px;height:12px;color:#0b0e16;-webkit-text-stroke:0.42px #0b0e16;left:671.30px;width:200px;text-align:center;transform-origin:50% 50%;transform:scaleX(0.899);">23 Oct 2019</div>
<div class="t" style="top:436.61px;font-size:9.2px;line-height:12px;height:12px;color:#0b0e16;-webkit-text-stroke:0.42px #0b0e16;left:671.30px;width:200px;text-align:center;transform-origin:50% 50%;transform:scaleX(0.923);">10:33:23</div>
<div class="a" style="left:759px;top:0;width:41px;height:402px;background:#30364c;"></div>
<div class="a" style="left:759px;top:401.8px;width:41px;height:1.6px;background:#4b4f5e;"></div>
<div class="a" style="left:758.8px;top:0;width:1.8px;height:413px;background:#262c3f;"></div>
<div class="a btn" style="left:761.4px;top:15.2px;width:36.8px;height:24.8px;"></div>
<div class="t" style="top:21.01px;font-size:9.2px;line-height:12px;height:12px;color:#e9edf7;-webkit-text-stroke:0.42px #e9edf7;left:680.40px;width:200px;text-align:center;transform-origin:50% 50%;transform:scaleX(0.895);">Measure</div>
<div class="a btn" style="left:761.4px;top:44.4px;width:36.8px;height:25.2px;"></div>
<div class="t" style="top:45.51px;font-size:9.2px;line-height:12px;height:12px;color:#e9edf7;-webkit-text-stroke:0.42px #e9edf7;left:680.40px;width:200px;text-align:center;transform-origin:50% 50%;transform:scaleX(0.891);">Results</div>
<div class="t" style="top:55.41px;font-size:9.2px;line-height:12px;height:12px;color:#e9edf7;-webkit-text-stroke:0.42px #e9edf7;left:680.80px;width:200px;text-align:center;transform-origin:50% 50%;transform:scaleX(0.929);">Table</div>
<div class="a" style="left:468.4px;top:0;width:290.4px;height:413.5px;background:#6b7aa2;box-shadow:-1px 1px 1.5px rgba(10,14,30,.7);"></div>
<div class="a" style="left:468.2px;top:24px;width:1.6px;height:389px;background:#7a8abd;"></div>
<div class="a" style="left:468.4px;top:0;width:290.4px;height:24.4px;background:linear-gradient(#45537a,#3f4b6d);"></div>
<div class="t" style="top:6.61px;font-size:9.2px;line-height:12px;height:12px;color:#e4e9f6;-webkit-text-stroke:0.42px #e4e9f6;left:473.00px;transform-origin:0 50%;transform:scaleX(0.764);">TRIGGER</div>
<svg class="a" style="left:736px;top:3px" width="20" height="20" viewBox="736 3 20 20"><circle cx="745.4" cy="12" r="7.2" fill="none" stroke="#9fb0d8" stroke-width="1"/></svg>
<div class="t" style="top:6.06px;font-size:10.5px;line-height:13px;height:13px;color:#a9b9e0;font-weight:bold;-webkit-text-stroke:0.42px #a9b9e0;left:645.80px;width:200px;text-align:center;transform-origin:50% 50%;transform:scaleX(0.810);">?</div>
<div class="a" style="left:468.4px;top:24.6px;width:290.4px;height:23.7px;background:linear-gradient(#a1b1d8,#9aaad2);"></div>
<div class="a" style="left:468.4px;top:50px;width:290.4px;height:23px;background:linear-gradient(#a1b1d8,#9aaad2);"></div>
<div class="t" style="top:31.31px;font-size:9.2px;line-height:12px;height:12px;color:#0b0e16;-webkit-text-stroke:0.42px #0b0e16;left:473.00px;transform-origin:0 50%;transform:scaleX(0.788);">SETTINGS</div>
<div class="t" style="top:56.11px;font-size:9.2px;line-height:12px;height:12px;color:#0b0e16;-webkit-text-stroke:0.42px #0b0e16;left:473.00px;transform-origin:0 50%;transform:scaleX(0.861);">MODE &amp; HOLDOFF</div>
<svg class="a" style="left:737.2px;top:30.4px" width="12" height="14" viewBox="0 0 12 14"><path d="M2.4,2.6 L6.9,7 L2.4,11.4" fill="none" stroke="#1a2136" stroke-width="1.9"/></svg>
<div class="t" style="top:78.01px;font-size:9.2px;line-height:12px;height:12px;color:#0b0e16;-webkit-text-stroke:0.42px #0b0e16;left:473.00px;transform-origin:0 50%;transform:scaleX(0.943);">Trigger Mode</div>
<div class="a lb" style="left:473px;top:90.6px;width:72.6px;height:20.4px;overflow:hidden;"><div class="a" style="left:35.7px;top:0;width:37px;height:21px;background:#2abdf0;"></div></div>
<div class="t" style="top:94.41px;font-size:9.2px;line-height:12px;height:12px;color:#0b0e16;-webkit-text-stroke:0.42px #0b0e16;left:391.40px;width:200px;text-align:center;transform-origin:50% 50%;transform:scaleX(0.994);">Auto</div>
<div class="t" style="top:94.41px;font-size:9.2px;line-height:12px;height:12px;color:#0b0e16;-webkit-text-stroke:0.42px #0b0e16;left:428.20px;width:200px;text-align:center;transform-origin:50% 50%;transform:scaleX(0.912);">Normal</div>
<div class="a lb" style="left:563.8px;top:90.6px;width:72.2px;height:20.4px;"></div>
<div class="t" style="top:94.41px;font-size:9.2px;line-height:12px;height:12px;color:#0b0e16;-webkit-text-stroke:0.42px #0b0e16;left:500.00px;width:200px;text-align:center;transform-origin:50% 50%;transform:scaleX(0.941);">Force Trigger</div>
<div class="t" style="top:78.01px;font-size:9.2px;line-height:12px;height:12px;color:#0b0e16;-webkit-text-stroke:0.42px #0b0e16;left:651.70px;transform-origin:0 50%;transform:scaleX(0.930);">Trigger Frequency Counter</div>
<div class="a lb" style="left:655px;top:90.6px;width:10.6px;height:20.4px;"></div>
<div class="a lb" style="left:667px;top:90.6px;width:25px;height:20.4px;"></div>
<div class="t" style="top:94.41px;font-size:9.2px;line-height:12px;height:12px;color:#0b0e16;-webkit-text-stroke:0.42px #0b0e16;left:580.00px;width:200px;text-align:center;transform-origin:50% 50%;transform:scaleX(1.075);">Off</div>
<div class="t" style="top:120.81px;font-size:9.2px;line-height:12px;height:12px;color:#0b0e16;-webkit-text-stroke:0.42px #0b0e16;left:472.80px;transform-origin:0 50%;transform:scaleX(0.995);">Holdoff</div>
<div class="a lb" style="left:473px;top:134px;width:72.6px;height:20px;background:#adc0e8;"></div>
<div class="t" style="top:137.81px;font-size:9.2px;line-height:12px;height:12px;color:#0b0e16;-webkit-text-stroke:0.42px #0b0e16;left:345.00px;width:200px;text-align:right;transform-origin:100% 50%;transform:scaleX(0.936);">20.00 ns</div>
<svg class="a" style="left:468px;top:160px" width="230" height="100" viewBox="468 160 230 100">
<rect x="488.7" y="167.7" width="43.4" height="76.8" fill="#2f8fdf"/>
<rect x="532" y="167.7" width="46.8" height="76.8" fill="#b79a84"/>
<rect x="583.6" y="167.7" width="43" height="76.8" fill="#2f8fdf"/>
<rect x="626.5" y="167.7" width="43.2" height="76.8" fill="#b79a84"/>
<path d="M497.4,200 V244.5 M592.9,200 V244.5" stroke="#f4f6ff" stroke-width="1" stroke-dasharray="2.4 1.8" fill="none"/>
<path d="M492,250.7 H506.8 M561.5,250.7 H575" stroke="#27314d" stroke-width="1" fill="none"/>
<path d="M489.3,250.7 L493.2,248.7 V252.7 Z M577.9,250.7 L574,248.7 V252.7 Z" fill="#1b2440"/>
<path d="M476.8,234.1 L495.6,234.1 L500.0,202.4 L503.4,206.0 L508.7,235.5 L509.0,239.6 L509.7,234.1 L515.0,234.1 L519.4,202.4 L522.8,206.0 L528.1,235.5 L528.4,239.6 L529.1,234.1 L534.4,234.1 L538.8,202.4 L542.2,206.0 L547.5,235.5 L547.8,239.6 L548.5,234.1 L553.8,234.1 L558.2,202.4 L561.6,206.0 L566.9,235.5 L567.2,239.6 L567.9,234.1 L590.7,234.1 L595.1,202.4 L598.5,206.0 L603.8,235.5 L604.1,239.6 L604.8,234.1 L610.1,234.1 L614.5,202.4 L617.9,206.0 L623.2,235.5 L623.5,239.6 L624.2,234.1 L629.5,234.1 L633.9,202.4 L637.3,206.0 L642.6,235.5 L642.9,239.6 L643.6,234.1 L648.9,234.1 L653.3,202.4 L656.7,206.0 L662.0,235.5 L662.3,239.6 L663.0,234.1 L670.0,234.1" fill="none" stroke="#6a6420" stroke-width="2" stroke-linejoin="round" opacity="0.55"/>
<path d="M476.8,234.1 L495.6,234.1 L500.0,202.4 L503.4,206.0 L508.7,235.5 L509.0,239.6 L509.7,234.1 L515.0,234.1 L519.4,202.4 L522.8,206.0 L528.1,235.5 L528.4,239.6 L529.1,234.1 L534.4,234.1 L538.8,202.4 L542.2,206.0 L547.5,235.5 L547.8,239.6 L548.5,234.1 L553.8,234.1 L558.2,202.4 L561.6,206.0 L566.9,235.5 L567.2,239.6 L567.9,234.1 L590.7,234.1 L595.1,202.4 L598.5,206.0 L603.8,235.5 L604.1,239.6 L604.8,234.1 L610.1,234.1 L614.5,202.4 L617.9,206.0 L623.2,235.5 L623.5,239.6 L624.2,234.1 L629.5,234.1 L633.9,202.4 L637.3,206.0 L642.6,235.5 L642.9,239.6 L643.6,234.1 L648.9,234.1 L653.3,202.4 L656.7,206.0 L662.0,235.5 L662.3,239.6 L663.0,234.1 L670.0,234.1" fill="none" stroke="#f4e630" stroke-width="1.25" stroke-linejoin="round"/>
<path d="M494.7,187.3 H502.1 Q503.5,187.3 503.5,188.7 V194.6 Q503.5,196 502.1,196 H500.1 L498.4,199.6 L496.7,196 H494.7 Q493.3,196 493.3,194.6 V188.7 Q493.3,187.3 494.7,187.3 Z" fill="#eceeff" stroke="#3a4aa8" stroke-width="0.9"/>
<path d="M589.2,187.3 H596.6 Q598.0,187.3 598.0,188.7 V194.6 Q598.0,196 596.6,196 H594.6 L592.9,199.6 L591.2,196 H589.2 Q587.8,196 587.8,194.6 V188.7 Q587.8,187.3 589.2,187.3 Z" fill="#eceeff" stroke="#3a4aa8" stroke-width="0.9"/>
</svg>

<div class="t" style="top:167.62px;font-size:6.3px;line-height:8px;height:8px;color:#15203a;font-weight:bold;-webkit-text-stroke:0.1px #15203a;left:410.30px;width:200px;text-align:center;transform-origin:50% 50%;transform:scaleX(1.021);">Acquisition</div>
<div class="t" style="top:167.62px;font-size:6.3px;line-height:8px;height:8px;color:#15203a;font-weight:bold;-webkit-text-stroke:0.1px #15203a;left:505.20px;width:200px;text-align:center;transform-origin:50% 50%;transform:scaleX(1.021);">Acquisition</div>
<div class="t" style="top:168.66px;font-size:5.3px;line-height:7px;height:7px;color:#15203a;font-weight:bold;-webkit-text-stroke:0.1px #15203a;left:454.40px;width:200px;text-align:center;transform-origin:50% 50%;">Potential trigger</div>
<div class="t" style="top:175.26px;font-size:5.3px;line-height:7px;height:7px;color:#15203a;font-weight:bold;-webkit-text-stroke:0.1px #15203a;left:454.00px;width:200px;text-align:center;transform-origin:50% 50%;transform:scaleX(0.988);">events are</div>
<div class="t" style="top:182.06px;font-size:5.3px;line-height:7px;height:7px;color:#15203a;font-weight:bold;-webkit-text-stroke:0.1px #15203a;left:454.40px;width:200px;text-align:center;transform-origin:50% 50%;">ignored during</div>
<div class="t" style="top:188.66px;font-size:5.3px;line-height:7px;height:7px;color:#15203a;font-weight:bold;-webkit-text-stroke:0.1px #15203a;left:454.70px;width:200px;text-align:center;transform-origin:50% 50%;transform:scaleX(1.019);">Holdoff period</div>
<div class="t" style="top:246.08px;font-size:6.4px;line-height:8px;height:8px;color:#15203a;font-weight:bold;-webkit-text-stroke:0.1px #15203a;left:433.40px;width:200px;text-align:center;transform-origin:50% 50%;transform:scaleX(1.033);">Trigger Holdoff</div>
<div class="t" style="top:188.02px;font-size:6.3px;line-height:8px;height:8px;color:#15203a;font-weight:bold;-webkit-text-stroke:0.1px #15203a;left:398.40px;width:200px;text-align:center;transform-origin:50% 50%;transform:scaleX(1.036);">T</div>
<div class="t" style="top:188.02px;font-size:6.3px;line-height:8px;height:8px;color:#15203a;font-weight:bold;-webkit-text-stroke:0.1px #15203a;left:492.90px;width:200px;text-align:center;transform-origin:50% 50%;transform:scaleX(1.036);">T</div>
<div class="a" style="left:472.6px;top:265.6px;width:124.8px;height:21.8px;background:#a8b8e2;border-radius:3px;box-shadow:0 0 0 1px #45c3f2;"></div>
<div class="a cb" style="left:474.6px;top:270.3px;"><svg class="ck" width="14" height="14" viewBox="0 0 14 14"><path d="M3.7,6.8 L5.7,10.1 L10.4,3.1" fill="none" stroke="#070b18" stroke-width="1.9"/></svg></div>
<div class="t" style="top:270.51px;font-size:9.2px;line-height:12px;height:12px;color:#0b0e16;-webkit-text-stroke:0.42px #0b0e16;left:492.80px;transform-origin:0 50%;transform:scaleX(0.962);">Act On Event</div>
<div class="a cb" style="left:490.4px;top:293.8px;"><svg class="ck" width="14" height="14" viewBox="0 0 14 14"><path d="M3.7,6.8 L5.7,10.1 L10.4,3.1" fill="none" stroke="#070b18" stroke-width="1.9"/></svg></div>
<div class="t" style="top:293.91px;font-size:9.2px;line-height:12px;height:12px;color:#0b0e16;-webkit-text-stroke:0.42px #0b0e16;left:508.90px;transform-origin:0 50%;transform:scaleX(0.861);">Save Image</div>
<div class="a cb" style="left:490.4px;top:317.1px;"><svg class="ck" width="14" height="14" viewBox="0 0 14 14"><path d="M3.7,6.8 L5.7,10.1 L10.4,3.1" fill="none" stroke="#070b18" stroke-width="1.9"/></svg></div>
<div class="t" style="top:317.41px;font-size:9.2px;line-height:12px;height:12px;color:#0b0e16;-webkit-text-stroke:0.42px #0b0e16;left:508.90px;transform-origin:0 50%;transform:scaleX(0.943);">Save Waveform</div>
<div class="a cb" style="left:490.4px;top:340.4px;"><svg class="ck" width="14" height="14" viewBox="0 0 14 14"><path d="M3.7,6.8 L5.7,10.1 L10.4,3.1" fill="none" stroke="#070b18" stroke-width="1.9"/></svg></div>
<div class="t" style="top:341.01px;font-size:9.2px;line-height:12px;height:12px;color:#0b0e16;-webkit-text-stroke:0.42px #0b0e16;left:508.90px;transform-origin:0 50%;transform:scaleX(0.979);">Stop Acquisition</div>
<div class="a cb" style="left:490.4px;top:363.5px;"><svg class="ck" width="14" height="14" viewBox="0 0 14 14"><path d="M3.7,6.8 L5.7,10.1 L10.4,3.1" fill="none" stroke="#070b18" stroke-width="1.9"/></svg></div>
<div class="t" style="top:364.41px;font-size:9.2px;line-height:12px;height:12px;color:#0b0e16;-webkit-text-stroke:0.42px #0b0e16;left:508.90px;transform-origin:0 50%;transform:scaleX(0.922);">Remote Interface SRQ</div>
<div class="a cb" style="left:490.4px;top:386.4px;"><svg class="ck" width="14" height="14" viewBox="0 0 14 14"><path d="M3.7,6.8 L5.7,10.1 L10.4,3.1" fill="none" stroke="#070b18" stroke-width="1.9"/></svg></div>
<div class="t" style="top:386.91px;font-size:9.2px;line-height:12px;height:12px;color:#0b0e16;-webkit-text-stroke:0.42px #0b0e16;left:508.90px;transform-origin:0 50%;transform:scaleX(0.912);">AUX OUT Pulse</div>
<div class="t" style="top:268.61px;font-size:9.2px;line-height:12px;height:12px;color:#0b0e16;-webkit-text-stroke:0.42px #0b0e16;left:630.60px;transform-origin:0 50%;transform:scaleX(0.964);">Repeat Actions</div>
<div class="a lb" style="left:630.8px;top:286.4px;width:72.5px;height:20.3px;background:#adc0e8;"></div>
<div class="t" style="top:290.61px;font-size:9.2px;line-height:12px;height:12px;color:#0b0e16;-webkit-text-stroke:0.42px #0b0e16;left:500.00px;width:200px;text-align:right;transform-origin:100% 50%;transform:scaleX(0.820);">9</div>
<div class="t" style="top:316.81px;font-size:9.2px;line-height:12px;height:12px;color:#0b0e16;-webkit-text-stroke:0.42px #0b0e16;left:630.80px;transform-origin:0 50%;transform:scaleX(1.024);">0 /9</div>
<div class="a" style="left:719.6px;top:0;width:81px;height:11.1px;background:#2c3349;"></div>
<div class="t" style="top:-2.23px;font-size:12.2px;line-height:15px;height:15px;color:#ffffff;font-weight:bold;-webkit-text-stroke:0.35px #ffffff;left:732.00px;transform-origin:0 50%;transform:scaleX(1.054);">Tek</div>
<div class="t" style="top:-2.23px;font-size:12.2px;line-height:15px;height:15px;color:#ffffff;font-weight:bold;-webkit-text-stroke:0.35px #ffffff;left:753.90px;transform-origin:0 50%;transform:scaleX(1.019);">tronix</div>
<svg class="a" style="left:742px;top:0" width="14" height="14" viewBox="742 0 14 14"><path d="M751.9,2.4 L746.3,10.4" stroke="#27b7ea" stroke-width="1.7" fill="none"/></svg>
</div></body></html>
